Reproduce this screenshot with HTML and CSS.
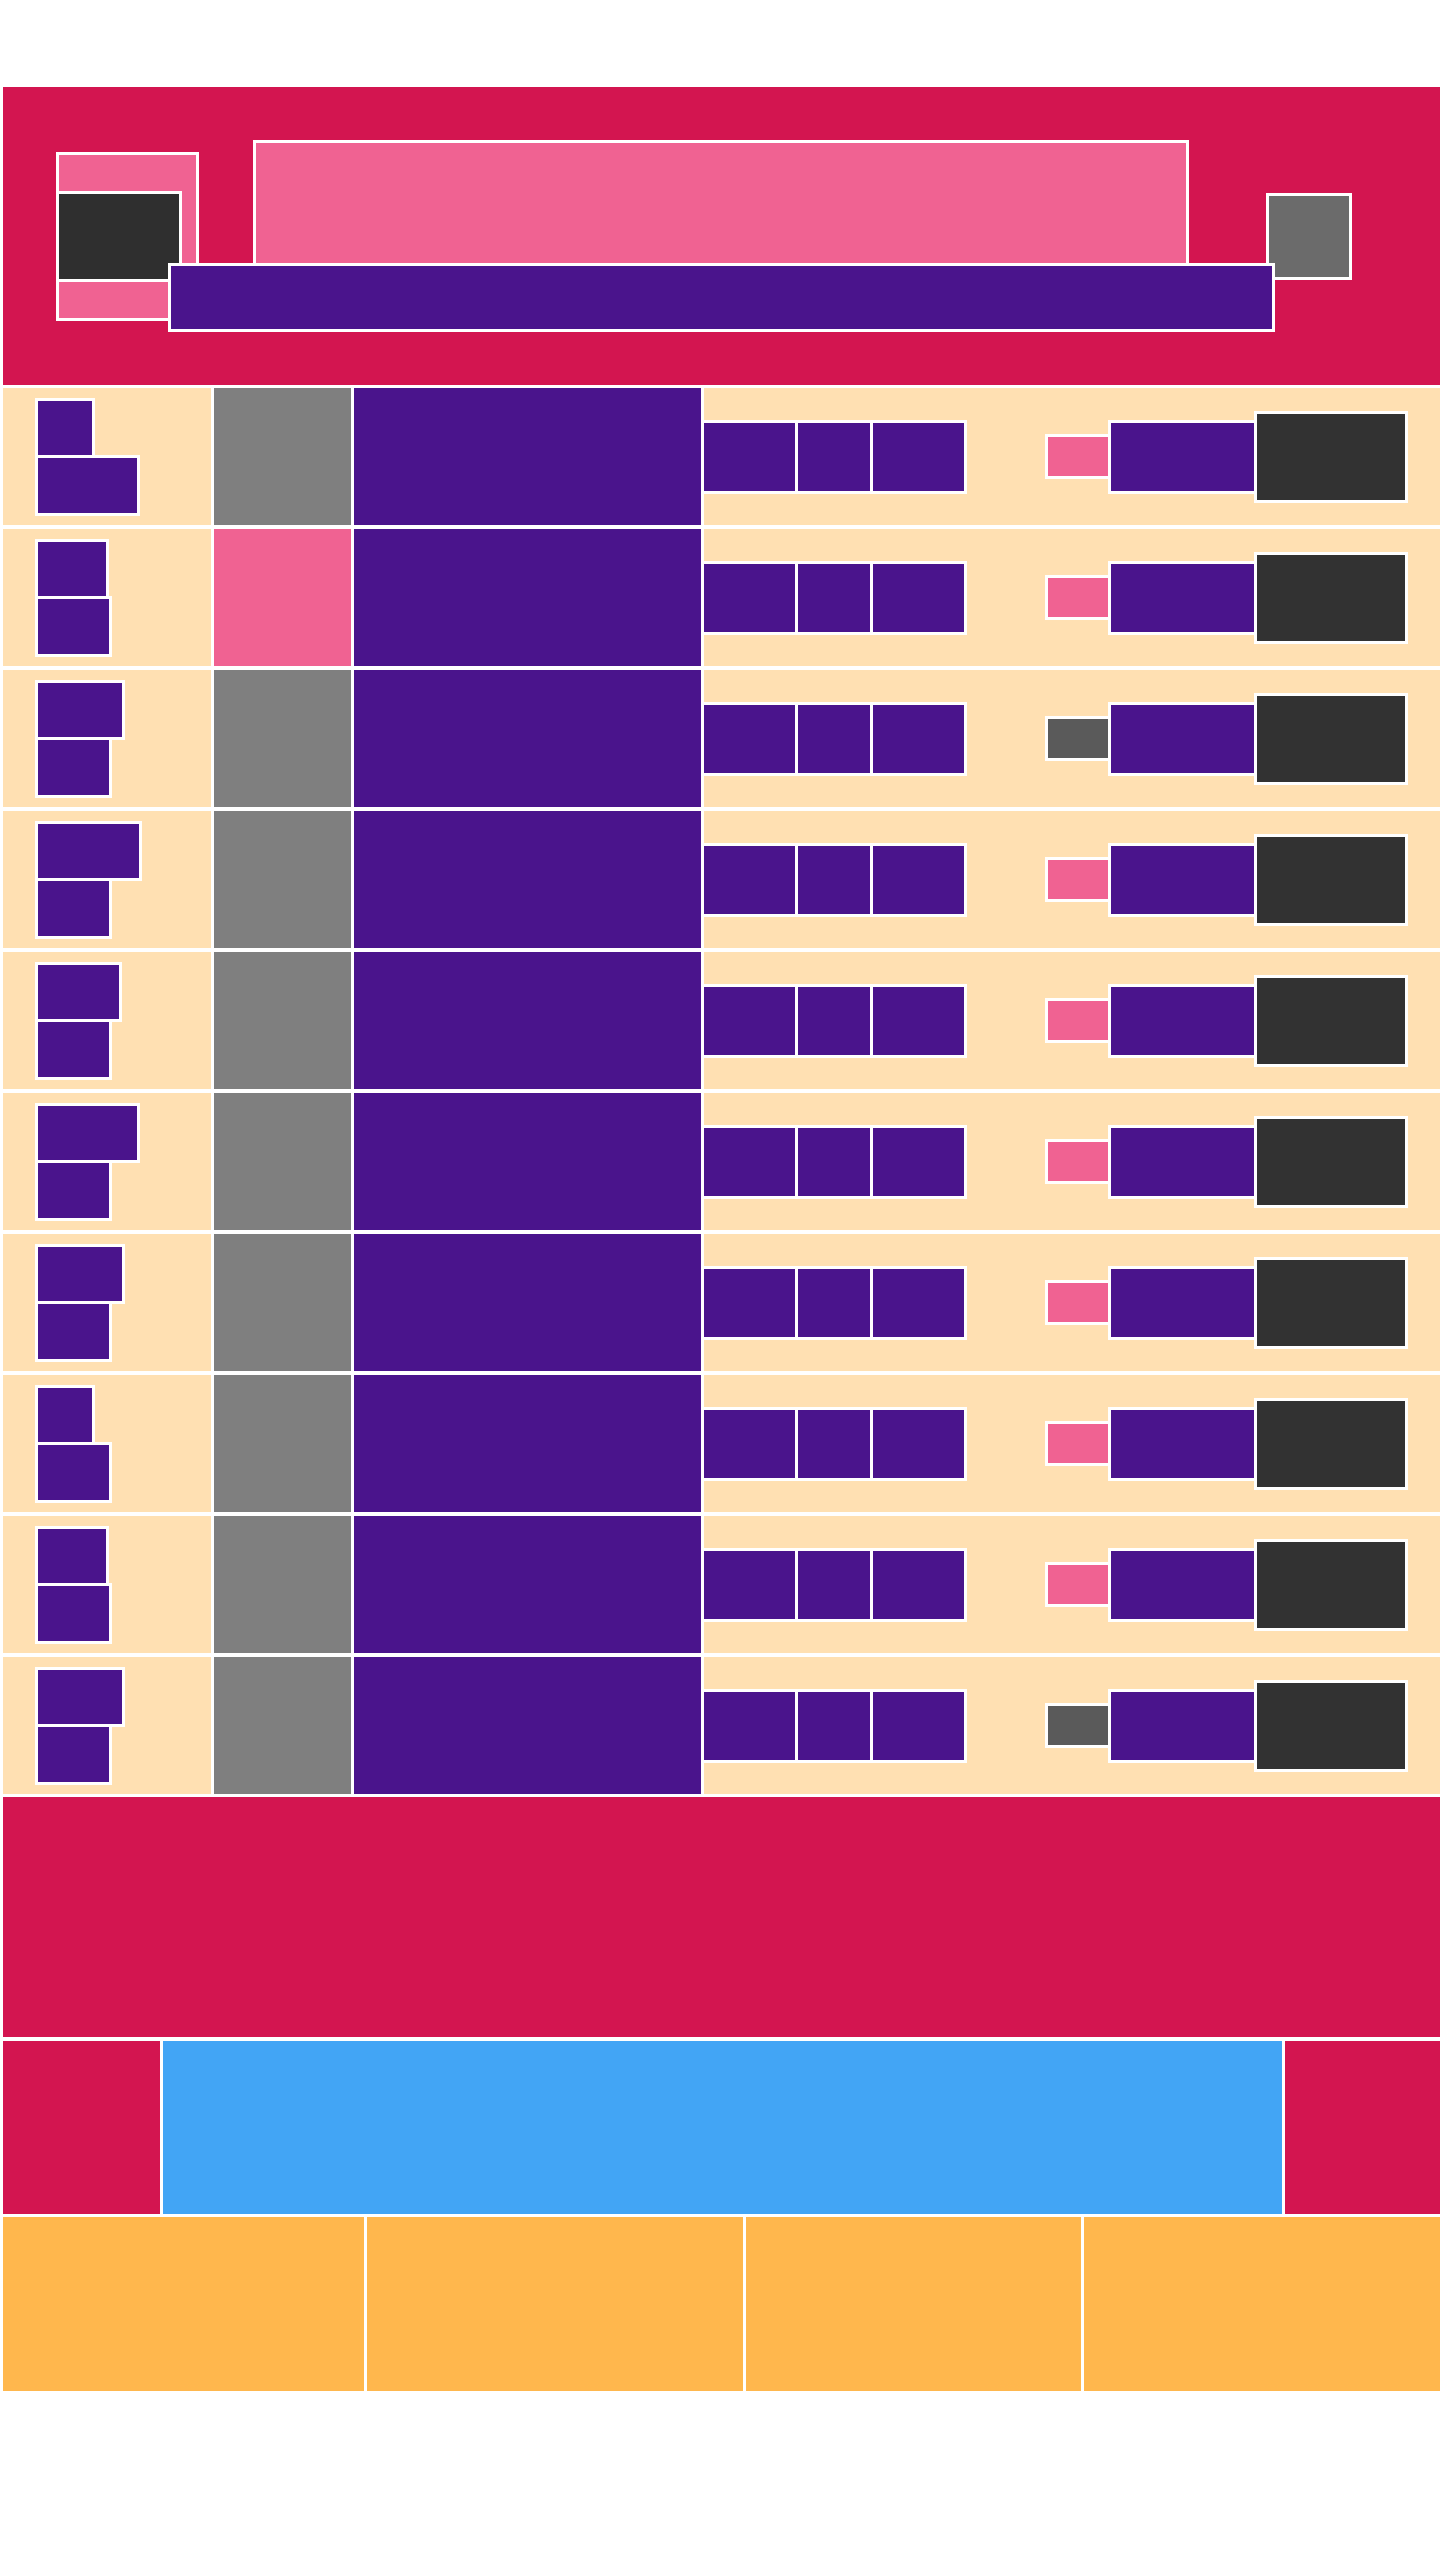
FILE: index.html
```html
<!DOCTYPE html>
<html lang="en">
<head>
    <meta charset="UTF-8">
    <meta name="viewport" content="width=device-width, initial-scale=1.0">
    <title>Shop</title>
    <link rel="stylesheet" href="styles.css">
</head>
<body>
    <div class="page">
        <header class="top">
            <div class="brand">
                <div class="brand-mark"></div>
            </div>
            <div class="top-center">
                <div class="banner"></div>
                <div class="search"></div>
            </div>
            <div class="cart"></div>
        </header>

        <section class="list">
            <div class="row">
                <div class="cell who"><div class="line w-60"></div><div class="line w-105"></div></div>
                <div class="cell thumb"></div>
                <div class="cell title"></div>
                <div class="cell actions">
                    <div class="tags"><span class="tag wide"></span><span class="tag"></span><span class="tag wide"></span></div>
                    <span class="dot"></span><span class="chip"></span><span class="btn"></span>
                </div>
            </div>
            <div class="row">
                <div class="cell who"><div class="line w-74"></div><div class="line w-77"></div></div>
                <div class="cell thumb alt"></div>
                <div class="cell title"></div>
                <div class="cell actions">
                    <div class="tags"><span class="tag wide"></span><span class="tag"></span><span class="tag wide"></span></div>
                    <span class="dot"></span><span class="chip"></span><span class="btn"></span>
                </div>
            </div>
            <div class="row">
                <div class="cell who"><div class="line w-90"></div><div class="line w-77"></div></div>
                <div class="cell thumb"></div>
                <div class="cell title"></div>
                <div class="cell actions">
                    <div class="tags"><span class="tag wide"></span><span class="tag"></span><span class="tag wide"></span></div>
                    <span class="dot off"></span><span class="chip"></span><span class="btn"></span>
                </div>
            </div>
            <div class="row">
                <div class="cell who"><div class="line w-107"></div><div class="line w-77"></div></div>
                <div class="cell thumb"></div>
                <div class="cell title"></div>
                <div class="cell actions">
                    <div class="tags"><span class="tag wide"></span><span class="tag"></span><span class="tag wide"></span></div>
                    <span class="dot"></span><span class="chip"></span><span class="btn"></span>
                </div>
            </div>
            <div class="row">
                <div class="cell who"><div class="line w-87"></div><div class="line w-77"></div></div>
                <div class="cell thumb"></div>
                <div class="cell title"></div>
                <div class="cell actions">
                    <div class="tags"><span class="tag wide"></span><span class="tag"></span><span class="tag wide"></span></div>
                    <span class="dot"></span><span class="chip"></span><span class="btn"></span>
                </div>
            </div>
            <div class="row">
                <div class="cell who"><div class="line w-105"></div><div class="line w-77"></div></div>
                <div class="cell thumb"></div>
                <div class="cell title"></div>
                <div class="cell actions">
                    <div class="tags"><span class="tag wide"></span><span class="tag"></span><span class="tag wide"></span></div>
                    <span class="dot"></span><span class="chip"></span><span class="btn"></span>
                </div>
            </div>
            <div class="row">
                <div class="cell who"><div class="line w-90"></div><div class="line w-77"></div></div>
                <div class="cell thumb"></div>
                <div class="cell title"></div>
                <div class="cell actions">
                    <div class="tags"><span class="tag wide"></span><span class="tag"></span><span class="tag wide"></span></div>
                    <span class="dot"></span><span class="chip"></span><span class="btn"></span>
                </div>
            </div>
            <div class="row">
                <div class="cell who"><div class="line w-60"></div><div class="line w-77"></div></div>
                <div class="cell thumb"></div>
                <div class="cell title"></div>
                <div class="cell actions">
                    <div class="tags"><span class="tag wide"></span><span class="tag"></span><span class="tag wide"></span></div>
                    <span class="dot"></span><span class="chip"></span><span class="btn"></span>
                </div>
            </div>
            <div class="row">
                <div class="cell who"><div class="line w-74"></div><div class="line w-77"></div></div>
                <div class="cell thumb"></div>
                <div class="cell title"></div>
                <div class="cell actions">
                    <div class="tags"><span class="tag wide"></span><span class="tag"></span><span class="tag wide"></span></div>
                    <span class="dot"></span><span class="chip"></span><span class="btn"></span>
                </div>
            </div>
            <div class="row">
                <div class="cell who"><div class="line w-90"></div><div class="line w-77"></div></div>
                <div class="cell thumb"></div>
                <div class="cell title"></div>
                <div class="cell actions">
                    <div class="tags"><span class="tag wide"></span><span class="tag"></span><span class="tag wide"></span></div>
                    <span class="dot off"></span><span class="chip"></span><span class="btn"></span>
                </div>
            </div>
        </section>

        <section class="promo"></section>

        <section class="strip">
            <div class="strip-side"></div>
            <div class="strip-main"></div>
            <div class="strip-side"></div>
        </section>

        <footer class="links">
            <div class="links-col"></div>
            <div class="links-col"></div>
            <div class="links-col"></div>
            <div class="links-col"></div>
        </footer>
    </div>
</body>
</html>
```

FILE: styles.css
```css
* {
    box-sizing: border-box;
}

body {
    font-family: "Liberation Sans", Arial, sans-serif;
    background-color: #fff;
    margin: 0;
    padding: 0;
}

.page {
    padding: 87px 0 0 3px;
}

/* header */
.top {
    display: flex;
    align-items: center;
    height: 298px;
    padding: 0 88px 0 53px;
    background-color: #d31550;
}

.brand {
    display: flex;
    align-items: center;
    flex-shrink: 0;
    width: 143px;
    height: 169px;
    background-color: #f06292;
    border: 3px solid #fff;
}

.brand-mark {
    width: 126px;
    height: 91px;
    margin-left: -3px;
    background-color: #2f2f2f;
    border: 3px solid #fff;
}

.top-center {
    flex: 1;
    min-width: 0;
    display: flex;
    flex-direction: column;
    align-items: center;
    margin-right: 23px;
}

.banner {
    flex-shrink: 0;
    width: 936px;
    height: 126px;
    margin-bottom: -3px;
    background-color: #f06292;
    border: 3px solid #fff;
}

.search {
    position: relative;
    z-index: 1;
    flex-shrink: 0;
    width: 1107px;
    height: 69px;
    background-color: #4a148c;
    border: 3px solid #fff;
}

.cart {
    flex-shrink: 0;
    width: 86px;
    height: 87px;
    background-color: #6b6b6b;
    border: 3px solid #fff;
}

/* list */
.list {
    display: flex;
    flex-direction: column;
    gap: 4px;
    margin-top: 3px;
}

.row {
    display: grid;
    grid-template-columns: 208px 137px 347px 1fr;
    column-gap: 3px;
    height: 137px;
}

.cell {
    background-color: #ffe0b2;
}

.who {
    display: flex;
    flex-direction: column;
    justify-content: center;
    align-items: flex-start;
    padding-left: 32px;
}

.line {
    height: 60px;
    background-color: #4a148c;
    border: 3px solid #fff;
}

.line + .line {
    height: 61px;
    margin-top: -3px;
}

.w-60 { width: 60px; }
.w-74 { width: 74px; }
.w-77 { width: 77px; }
.w-87 { width: 87px; }
.w-90 { width: 90px; }
.w-105 { width: 105px; }
.w-107 { width: 107px; }

.thumb {
    background-color: #7f7f7f;
}

.thumb.alt {
    background-color: #f06292;
}

.title {
    background-color: #4a148c;
}

.actions {
    display: flex;
    align-items: center;
}

.tags {
    display: flex;
    margin-left: -3px;
}

.tag {
    width: 78px;
    height: 74px;
    background-color: #4a148c;
    border: 3px solid #fff;
}

.tag + .tag {
    margin-left: -3px;
}

.tag.wide {
    width: 97px;
}

.dot {
    width: 66px;
    height: 45px;
    margin-left: 78px;
    background-color: #f06292;
    border: 3px solid #fff;
}

.dot.off {
    background-color: #5a5a5a;
}

.chip {
    width: 149px;
    height: 74px;
    margin-left: -3px;
    background-color: #4a148c;
    border: 3px solid #fff;
}

.btn {
    width: 154px;
    height: 92px;
    margin-left: -3px;
    background-color: #323232;
    border: 3px solid #fff;
}

/* bottom blocks */
.promo {
    height: 240px;
    margin-top: 3px;
    background-color: #d31550;
}

.strip {
    display: grid;
    grid-template-columns: 157px 1119px 1fr;
    column-gap: 3px;
    height: 173px;
    margin-top: 4px;
}

.strip-side {
    background-color: #d31550;
}

.strip-main {
    background-color: #42a5f5;
}

.links {
    display: grid;
    grid-template-columns: 361px 376px 335px 1fr;
    column-gap: 3px;
    height: 174px;
    margin-top: 3px;
}

.links-col {
    background-color: #ffb74d;
}
```
